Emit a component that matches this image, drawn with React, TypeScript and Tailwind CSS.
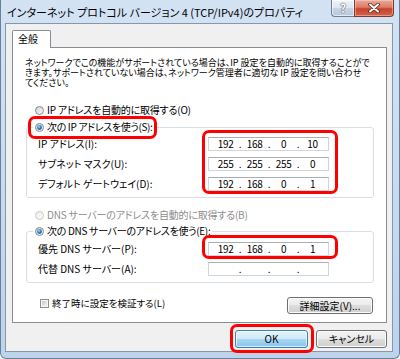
import React, { useId } from "react";

function uid() {
  return useId().replace(/[^a-zA-Z0-9]/g, "");
}

function Radio({ checked = false, disabled = false }: { checked?: boolean; disabled?: boolean }) {
  const id = uid();
  return (
    <svg width="9" height="9" viewBox="0 0 9 9" className="block shrink-0">
      <defs>
        <linearGradient id={`r${id}`} x1="0" y1="0" x2="1" y2="1">
          <stop offset="0" stopColor={disabled ? "#ececec" : "#cfcfcf"} />
          <stop offset="1" stopColor={disabled ? "#fbfbfb" : "#ffffff"} />
        </linearGradient>
        <radialGradient id={`d${id}`} cx="0.4" cy="0.35" r="0.7">
          <stop offset="0" stopColor="#b5e6ff" />
          <stop offset="0.5" stopColor="#2b8ad2" />
          <stop offset="1" stopColor="#0c4a86" />
        </radialGradient>
      </defs>
      <circle cx="4.5" cy="4.5" r="4" fill={`url(#r${id})`} stroke={disabled ? "#c9c9c9" : "#8a8a8a"} strokeWidth="1" />
      {checked && <circle cx="4.5" cy="4.5" r="2.4" fill={`url(#d${id})`} />}
    </svg>
  );
}

function Checkbox() {
  const id = uid();
  return (
    <svg width="9" height="9" viewBox="0 0 9 9" className="block shrink-0">
      <defs>
        <linearGradient id={`c${id}`} x1="0" y1="0" x2="1" y2="1">
          <stop offset="0" stopColor="#c6cace" />
          <stop offset="1" stopColor="#f4f4f4" />
        </linearGradient>
      </defs>
      <rect x="0.5" y="0.5" width="8" height="8" fill="#f6f6f6" stroke="#8e8f8f" />
      <rect x="2" y="2" width="5" height="5" fill={`url(#c${id})`} />
    </svg>
  );
}

function IpBox({ vals }: { vals: string[] }) {
  return (
    <div className="flex h-[14px] w-[121px] shrink-0 items-center border border-[#d0d4db] border-t-[#abadb3] bg-white pl-[4px] text-[10px] leading-[12px] tracking-[-0.3px]">
      {vals.map((v, i) => (
        <React.Fragment key={i}>
          <span className="w-[25px] text-center">{v}</span>
          {i < 3 && <span className="w-[4px] text-center">.</span>}
        </React.Fragment>
      ))}
    </div>
  );
}

function Row({ label, vals }: { label: string; vals: string[] }) {
  return (
    <div className="flex h-[20px] items-center pl-[11px]">
      <span className="w-[170px] shrink-0 text-[10px] leading-[12px]">{label}</span>
      <IpBox vals={vals} />
    </div>
  );
}

const btn =
  "flex items-center justify-center rounded-[3px] border border-[#707070] bg-[linear-gradient(#f2f2f2_0%,#ebebeb_50%,#dddddd_50%,#cfcfcf_100%)] shadow-[inset_0_0_0_1px_#fbfbfb] text-[10px] leading-[12px]";

export default function App() {
  return (
    <div className="relative h-[359px] w-[400px] overflow-hidden bg-white">
      <div className="flex h-[359px] w-[400px] flex-col rounded-b-[6px] border border-t-0 border-[#6c7f98] bg-gradient-to-b from-[#d3e3f4] to-[#bdd3ec] font-['Noto_Sans_CJK_JP',sans-serif] text-black [font-feature-settings:'palt']">
        {/* title bar */}
        <div className="flex h-[23px] shrink-0">
          <div className="whitespace-nowrap pl-[6px] pt-[4px] text-[11px] leading-[16px]">
            インターネット プロトコル バージョン 4 (TCP/IPv4)のプロパティ
          </div>
          <div className="ml-auto mr-[5px] flex h-[17px]">
            <div className="flex w-[23px] items-center justify-center rounded-bl-[4px] border border-t-0 border-r-0 border-[#6f8096] bg-[linear-gradient(#eef3f9_0%,#dde6f1_50%,#c6d4e4_50%,#b8c8dc_100%)] shadow-[inset_0_0_0_1px_rgba(255,255,255,0.6)]">
              <span className="text-[12px] font-bold leading-[14px] text-white [text-shadow:0_0_1px_#3a3a3a,0_0_1px_#3a3a3a]">?</span>
            </div>
            <div className="flex w-[40px] items-center justify-center rounded-br-[4px] border border-t-0 border-[#7a3b33] bg-[linear-gradient(#eaa99c_0%,#dd7b66_45%,#c8432a_55%,#d2644a_100%)] shadow-[inset_0_0_0_1px_rgba(255,220,210,0.45)]">
              <svg width="12" height="10" viewBox="0 0 12 10">
                <path d="M2 1.5 L10 8.5 M10 1.5 L2 8.5" stroke="#5a2a22" strokeWidth="3.6" strokeLinecap="round" />
                <path d="M2 1.5 L10 8.5 M10 1.5 L2 8.5" stroke="#ffffff" strokeWidth="2" strokeLinecap="round" />
              </svg>
            </div>
          </div>
        </div>

        {/* client area */}
        <div className="ml-[4px] h-[329px] w-[388px] shrink-0 border border-[#8597ad] bg-[#f0f0f0]">
          {/* tab */}
          <div className="relative z-10 ml-[6px] mt-[6px] h-[18px] w-[39px] rounded-t-[2px] border border-b-0 border-[#898c95] bg-white pl-[5px] text-[10px] leading-[15px]">
            全般
          </div>
          {/* panel */}
          <div className="-mt-[1px] ml-[6px] flex h-[276px] w-[375px] flex-col border border-[#898c95] bg-white">
            <div className="pl-[12px] pt-[10px] text-[9px] leading-[10px]">
              <div className="whitespace-nowrap">ネットワークでこの機能がサポートされている場合は、IP 設定を自動的に取得することがで</div>
              <div className="whitespace-nowrap">きます。サポートされていない場合は、ネットワーク管理者に適切な IP 設定を問い合わせ</div>
              <div className="whitespace-nowrap">てください。</div>
            </div>

            <div className="mt-[15px] flex h-[14px] items-center gap-[3px] pl-[22px] text-[10px] leading-[12px] tracking-[-0.2px]">
              <Radio />
              <span>IP アドレスを自動的に取得する(O)</span>
            </div>

            <fieldset className="ml-[13px] mt-[3px] w-[348px] rounded-[3px] border border-[#d5dfe5] pb-[3px]">
              <legend className="ml-[6px] px-[2px]">
                <div className="flex h-[14px] items-center gap-[3px] text-[10px] leading-[12px] tracking-[-0.35px]">
                  <Radio checked />
                  <span>次の IP アドレスを使う(S):</span>
                </div>
              </legend>
              <Row label="IP アドレス(I):" vals={["192", "168", "0", "10"]} />
              <Row label="サブネット マスク(U):" vals={["255", "255", "255", "0"]} />
              <Row label="デフォルト ゲートウェイ(D):" vals={["192", "168", "0", "1"]} />
            </fieldset>

            <div className="mt-[10px] flex h-[14px] items-center gap-[3px] pl-[22px] text-[10px] leading-[12px] tracking-[-0.2px] text-[#8d8d8d]">
              <Radio disabled />
              <span>DNS サーバーのアドレスを自動的に取得する(B)</span>
            </div>

            <fieldset className="ml-[13px] mt-[2px] w-[348px] rounded-[3px] border border-[#d5dfe5] pb-[3px]">
              <legend className="ml-[6px] px-[2px]">
                <div className="flex h-[14px] items-center gap-[3px] text-[10px] leading-[12px] tracking-[-0.3px]">
                  <Radio checked />
                  <span>次の DNS サーバーのアドレスを使う(E):</span>
                </div>
              </legend>
              <div className="mt-[1px]">
                <Row label="優先 DNS サーバー(P):" vals={["192", "168", "0", "1"]} />
                <Row label="代替 DNS サーバー(A):" vals={["", "", "", ""]} />
              </div>
            </fieldset>

            <div className="ml-[13px] mt-[14px] flex w-[347px] items-start justify-between">
              <div className="flex h-[12px] items-center gap-[3px] pl-[14px] text-[9.5px] leading-[12px]">
                <Checkbox />
                <span>終了時に設定を検証する(L)</span>
              </div>
              <div className={`${btn} h-[17px] w-[86px]`}>詳細設定(V)...</div>
            </div>
          </div>

          {/* bottom buttons */}
          <div className="ml-[6px] mt-[7px] flex w-[375px] justify-end gap-[8px]">
            <div className="flex h-[18px] w-[73px] items-center justify-center rounded-[3px] border border-[#3c7fb1] bg-[linear-gradient(#e4f3fc_0%,#cfe9f8_50%,#a9d8f3_50%,#86c3ea_100%)] shadow-[inset_0_0_0_1px_rgba(255,255,255,0.7)] text-[10px] leading-[12px]">
              OK
            </div>
            <div className={`${btn} h-[18px] w-[71px]`}>キャンセル</div>
          </div>
        </div>
      </div>

      {/* red annotation outlines */}
      <div className="pointer-events-none absolute left-[28px] top-[116px] h-[23px] w-[129px] rounded-[7px] border-[3px] border-[#ff0000]" />
      <div className="pointer-events-none absolute left-[202px] top-[130px] h-[64px] w-[136px] rounded-[7px] border-[3px] border-[#ff0000]" />
      <div className="pointer-events-none absolute left-[202px] top-[235px] h-[24px] w-[136px] rounded-[7px] border-[3px] border-[#ff0000]" />
      <div className="pointer-events-none absolute left-[230px] top-[324px] h-[29px] w-[84px] rounded-[7px] border-[3px] border-[#ff0000]" />
    </div>
  );
}
